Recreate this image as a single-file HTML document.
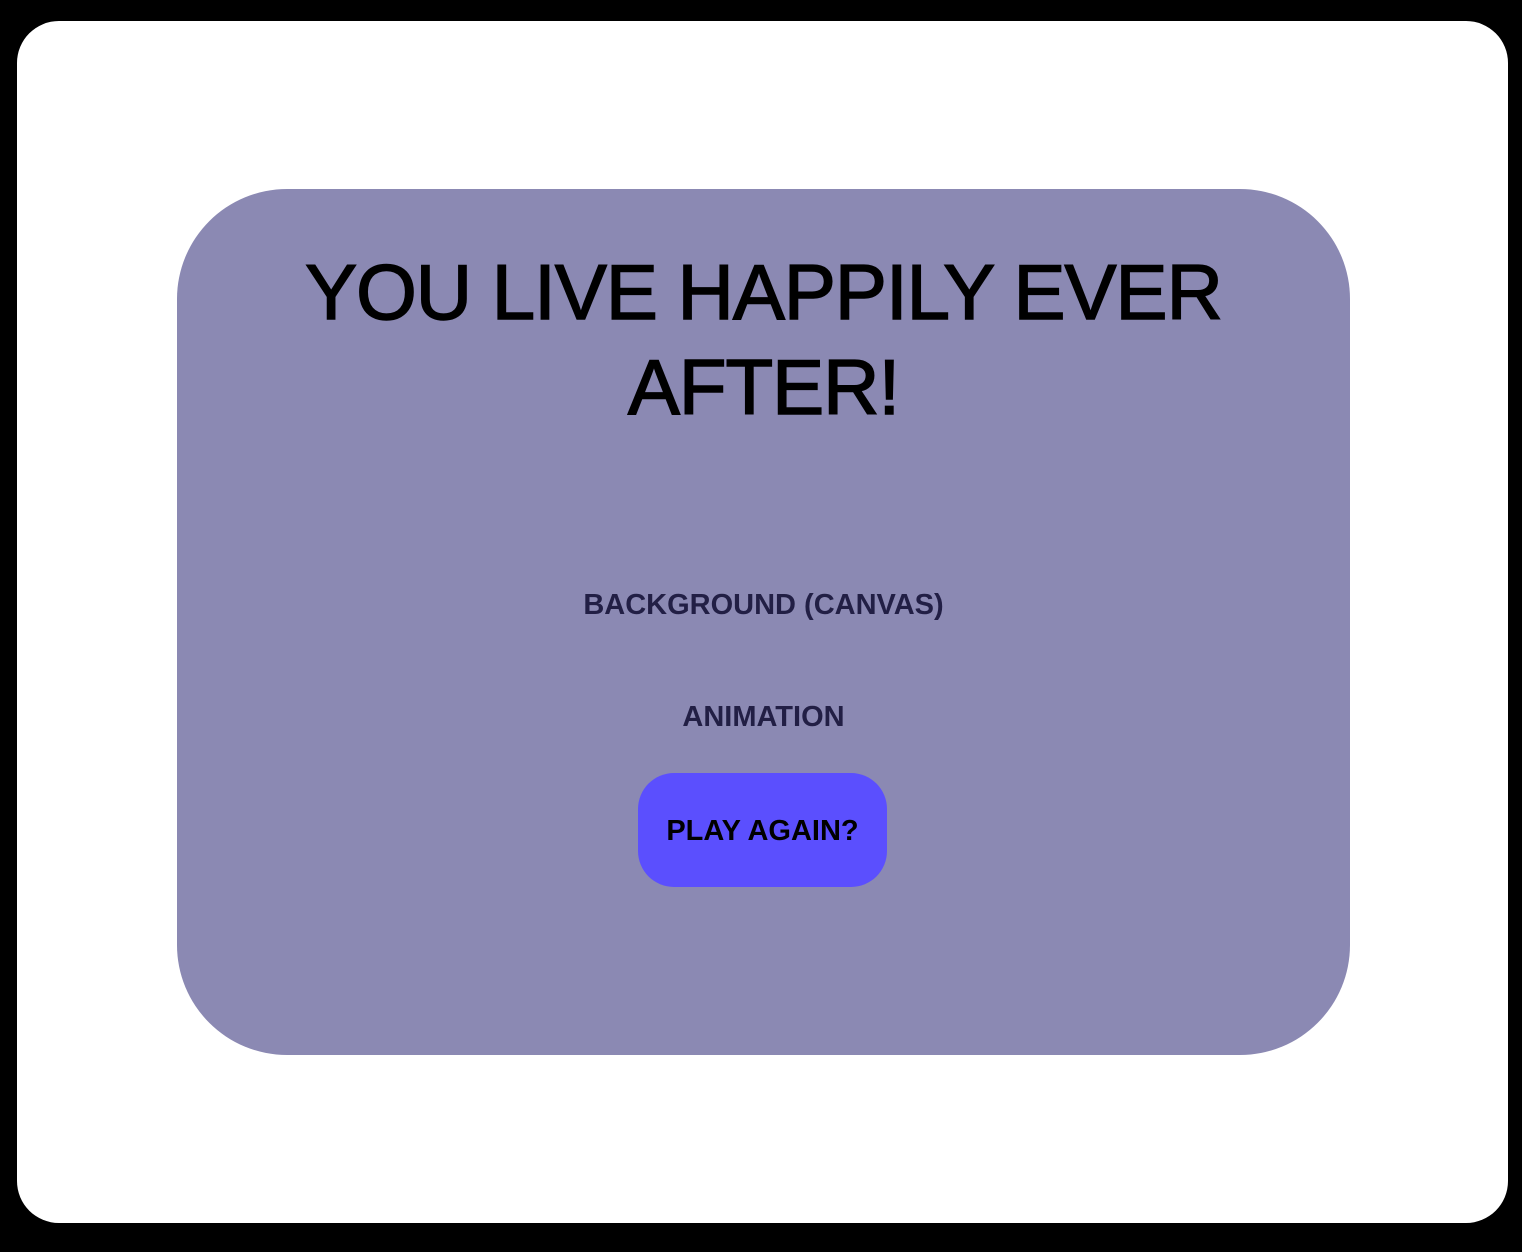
<!DOCTYPE html>
<html><head><style>
html,body{margin:0;padding:0;width:1522px;height:1252px;background:#000;overflow:hidden;font-family:"Liberation Sans",Arial,sans-serif;}
.outer{position:absolute;left:17px;top:21px;width:1491px;height:1202px;background:#fff;border-radius:42px;}
.card{position:absolute;left:177px;top:189px;width:1173px;height:866px;background:#8b89b3;border-radius:110px;}
h1{position:absolute;left:0;width:1173px;top:56px;margin:0;text-align:center;font-size:78px;line-height:95px;font-weight:400;color:#000;-webkit-text-stroke:1.5px #000;letter-spacing:-1px;}
.lbl{position:absolute;left:0;width:1173px;text-align:center;font-size:29px;font-weight:700;color:#221f45;}
.btn{position:absolute;left:461px;top:584px;width:249px;height:114px;background:#5b4ffe;border-radius:36px;display:flex;align-items:center;justify-content:center;font-size:29px;font-weight:700;color:#000;padding-top:3px;box-sizing:border-box;}
</style></head><body>
<div class="outer"></div>
<div class="card">
<h1>YOU LIVE HAPPILY EVER<br>AFTER!</h1>
<div class="lbl" style="top:400px">BACKGROUND (CANVAS)</div>
<div class="lbl" style="top:512px">ANIMATION</div>
<div class="btn">PLAY AGAIN?</div>
</div>
</body></html>
